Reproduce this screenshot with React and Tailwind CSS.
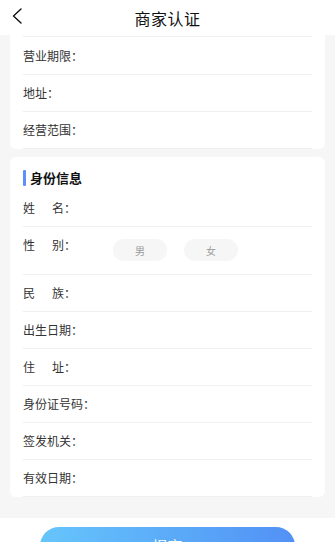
import React from 'react';

const font = { fontFamily: '"Noto Sans CJK SC", "Noto Sans", sans-serif' };

// 普通信息行
const Row = ({ children }) => (
    <div className="h-[37px] flex items-center border-b border-[#f0f0f0] text-[12px] text-[#333]">
        {children}
    </div>
);

// 两字标签，中间留空
const SpacedLabel = ({ a, b }) => (
    <span className="flex items-center">
        <span className="inline-block w-[29px]">{a}</span>
        <span>{b}：</span>
    </span>
);

const GenderPill = ({ label }) => (
    <div className="w-[54px] h-[22px] rounded-full bg-[#f6f6f6] text-[10px] text-[#999] flex items-center justify-center">
        {label}
    </div>
);

const App = () => {
    return (
        <div className="w-[335px] h-[542px] overflow-hidden bg-[#f6f6f6] flex flex-col" style={font}>
            {/* 顶部导航 */}
            <div className="h-[35px] shrink-0 bg-white relative flex items-center justify-center">
                <svg className="absolute left-[11px] top-[8px]" width="12" height="16" viewBox="0 0 12 16" fill="none">
                    <path d="M10 1 L2.5 8 L10 15" stroke="#111" strokeWidth="1.4" strokeLinecap="round" strokeLinejoin="round" />
                </svg>
                <span className="text-[16px] text-[#111] tracking-[0.5px]">商家认证</span>
            </div>

            {/* 营业信息卡片（上半部分已滚出） */}
            <div className="mx-[10px] bg-white rounded-b-[6px] px-[13px]">
                <div className="h-[2px] border-b border-[#f0f0f0]" />
                <div className="h-[38px] flex items-center border-b border-[#f0f0f0] text-[12px] text-[#333]">营业期限：</div>
                <Row>地址：</Row>
                <Row>经营范围：</Row>
            </div>

            {/* 身份信息卡片 */}
            <div className="mx-[10px] mt-[8px] bg-white rounded-[6px] px-[13px] pt-[13px]">
                <div className="flex items-start h-[20px]">
                    <div className="w-[3px] h-[16px] bg-[#5b8ff9] rounded-[1px]" />
                    <span className="ml-[4px] text-[13px] leading-[16px] font-bold text-[#111]">身份信息</span>
                </div>
                <div className="h-[37px] flex items-center border-b border-[#f0f0f0] text-[12px] text-[#333]">
                    <SpacedLabel a="姓" b="名" />
                </div>
                <div className="flex items-start pt-[12px] pb-[13px] border-b border-[#f0f0f0] text-[12px] text-[#333]">
                    <div className="w-[90px] leading-[12px]">
                        <SpacedLabel a="性" b="别" />
                    </div>
                    <div className="flex gap-[17px]">
                        <GenderPill label="男" />
                        <GenderPill label="女" />
                    </div>
                </div>
                <Row><SpacedLabel a="民" b="族" /></Row>
                <Row>出生日期：</Row>
                <Row><SpacedLabel a="住" b="址" /></Row>
                <Row>身份证号码：</Row>
                <Row>签发机关：</Row>
                <Row>有效日期：</Row>
            </div>

            {/* 底部提交 */}
            <div className="mt-[21px] flex-1 bg-white px-[40px] pt-[9px]">
                <button className="w-full h-[38px] rounded-full bg-gradient-to-r from-[#66c5fb] to-[#5291f5] text-white text-[15px] leading-[38px]">
                    提交
                </button>
            </div>
        </div>
    );
};

export default App;
